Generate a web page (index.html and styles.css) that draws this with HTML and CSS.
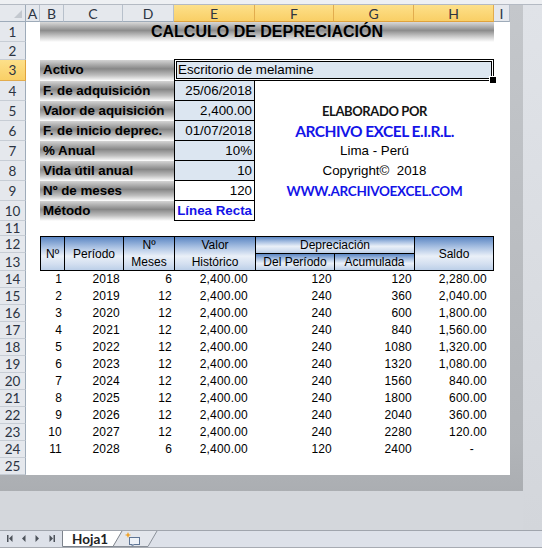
FILE: index.html
```html
<!DOCTYPE html>
<html lang="es">
<head>
<meta charset="utf-8">
<title>Calculo de depreciación</title>
<link rel="stylesheet" href="styles.css">
</head>
<body>
<div class="app">
  <div class="topstrip"></div>
  <div class="work">
    <div class="frame">
      <div class="sheet">
        <div class="corner"></div>
        <div class="ch">A</div>
        <div class="ch">B</div>
        <div class="ch">C</div>
        <div class="ch">D</div>
        <div class="ch sel">E</div>
        <div class="ch sel">F</div>
        <div class="ch sel">G</div>
        <div class="ch sel">H</div>
        <div class="ch">I</div>

        <div class="rh">1</div>
        <div class="rh">2</div>
        <div class="rh sel">3</div>
        <div class="rh">4</div>
        <div class="rh">5</div>
        <div class="rh">6</div>
        <div class="rh">7</div>
        <div class="rh">8</div>
        <div class="rh">9</div>
        <div class="rh">10</div>
        <div class="rh">11</div>
        <div class="rh">12</div>
        <div class="rh">13</div>
        <div class="rh">14</div>
        <div class="rh">15</div>
        <div class="rh">16</div>
        <div class="rh">17</div>
        <div class="rh">18</div>
        <div class="rh">19</div>
        <div class="rh">20</div>
        <div class="rh">21</div>
        <div class="rh">22</div>
        <div class="rh">23</div>
        <div class="rh">24</div>
        <div class="rh">25</div>

        <div class="title">CALCULO DE DEPRECIACIÓN</div>

        <div class="form">
          <div class="lbl">Activo</div>
          <div class="active">Escritorio de melamine</div>
          <div class="lbl">F. de adquisición</div>
          <div class="val">25/06/2018</div>
          <div class="lbl">Valor de aquisición</div>
          <div class="val">2,400.00</div>
          <div class="cr cr-by">ELABORADO POR</div>
          <div class="lbl">F. de inicio deprec.</div>
          <div class="val">01/07/2018</div>
          <div class="cr cr-name">ARCHIVO EXCEL E.I.R.L.</div>
          <div class="lbl">% Anual</div>
          <div class="val">10%</div>
          <div class="cr cr-text">Lima - Perú</div>
          <div class="lbl">Vida útil anual</div>
          <div class="val">10</div>
          <div class="cr cr-text">Copyright©&nbsp; 2018</div>
          <div class="lbl">Nº de meses</div>
          <div class="val white">120</div>
          <div class="cr cr-web">WWW.ARCHIVOEXCEL.COM</div>
          <div class="lbl">Método</div>
          <div class="val white link">Línea Recta</div>
        </div>

        <div class="thead">
          <div class="th span2">Nº</div>
          <div class="th span2">Período</div>
          <div class="th span2 two">Nº<br>Meses</div>
          <div class="th span2 two">Valor<br>Histórico</div>
          <div class="th dep">Depreciación</div>
          <div class="th span2">Saldo</div>
          <div class="th">Del Período</div>
          <div class="th">Acumulada</div>
        </div>

        <div class="tbody">
          <span>1</span><span>2018</span><span>6</span><span>2,400.00</span><span>120</span><span>120</span><span>2,280.00</span>
          <span>2</span><span>2019</span><span>12</span><span>2,400.00</span><span>240</span><span>360</span><span>2,040.00</span>
          <span>3</span><span>2020</span><span>12</span><span>2,400.00</span><span>240</span><span>600</span><span>1,800.00</span>
          <span>4</span><span>2021</span><span>12</span><span>2,400.00</span><span>240</span><span>840</span><span>1,560.00</span>
          <span>5</span><span>2022</span><span>12</span><span>2,400.00</span><span>240</span><span>1080</span><span>1,320.00</span>
          <span>6</span><span>2023</span><span>12</span><span>2,400.00</span><span>240</span><span>1320</span><span>1,080.00</span>
          <span>7</span><span>2024</span><span>12</span><span>2,400.00</span><span>240</span><span>1560</span><span>840.00</span>
          <span>8</span><span>2025</span><span>12</span><span>2,400.00</span><span>240</span><span>1800</span><span>600.00</span>
          <span>9</span><span>2026</span><span>12</span><span>2,400.00</span><span>240</span><span>2040</span><span>360.00</span>
          <span>10</span><span>2027</span><span>12</span><span>2,400.00</span><span>240</span><span>2280</span><span>120.00</span>
          <span>11</span><span>2028</span><span>6</span><span>2,400.00</span><span>120</span><span>2400</span><span class="dash">-</span>
        </div>
      </div>
    </div>
    <div class="rightfill"></div>
  </div>
  <div class="tabbar">
    <svg class="nav" width="62" height="16" viewBox="0 0 62 16">
      <g fill="#4d525a">
        <rect x="7" y="4" width="1.5" height="7"/>
        <path d="M12.5 4 L12.5 11 L9 7.5 Z"/>
        <path d="M25.5 4 L25.5 11 L22 7.5 Z"/>
        <path d="M35.5 4 L35.5 11 L39 7.5 Z"/>
        <path d="M49.5 4 L49.5 11 L53 7.5 Z"/>
        <rect x="53.5" y="4" width="1.5" height="7"/>
      </g>
    </svg>
    <div class="tabs">
      <svg class="tabshape" width="100" height="16" viewBox="0 0 100 16">
        <path d="M60 0 L51 15.5 L86 15.5 L95 0 Z" fill="#e3e6ec"/>
        <path d="M51 15.5 L86 15.5 L95 0" fill="none" stroke="#8a9099" stroke-width="1"/>
        <path d="M0.5 0 L0.5 15.5 L51 15.5 L60 0 Z" fill="#ffffff"/>
        <path d="M0.5 0 L0.5 15.5 L51 15.5 L60 0" fill="none" stroke="#7d838c" stroke-width="1"/>
        <rect x="67.5" y="6.5" width="10" height="7" fill="#eef2f8" stroke="#5f7595"/>
        <path d="M70 13.5 L70 15 L72.5 13.5" fill="#eef2f8" stroke="#5f7595" stroke-width="0.8"/>
        <path d="M66 1 L67 3.2 L69.2 4 L67 4.8 L66 7 L65 4.8 L62.8 4 L65 3.2 Z" fill="#f0a22a"/>
      </svg>
      <span class="tabname">Hoja1</span>
    </div>
  </div>
</div>
</body>
</html>
```

FILE: styles.css
```css
* { box-sizing: border-box; }

body {
  margin: 0;
  width: 542px;
  height: 548px;
  overflow: hidden;
  background: #d4d7dc;
  font-family: "Liberation Sans", Arial, sans-serif;
  color: #000;
}

.app {
  width: 542px;
  height: 548px;
  display: flex;
  flex-direction: column;
}

.topstrip {
  height: 5px;
  background: #eef0f3;
  border-bottom: 1px solid #b4bac3;
}

.work {
  height: 525px;
  display: flex;
  background: #d4d7dc;
}

.frame {
  align-self: flex-start;
  padding: 0 13px 16px 0;
  background: linear-gradient(#c4c7cb, #b2b5b9 90%, #abaeb2);
}

.rightfill {
  flex: 1;
  background: linear-gradient(#e0e3e8, #d3d6db);
}

.sheet {
  width: 510px;
  display: grid;
  grid-template-columns: 26px 14px 24px 59px 51px 81px 79px 80px 80px 16px;
  grid-template-rows: 17px 20px 18px 21px repeat(7, 20px) 15px 17px 18px repeat(12, 17px);
  background: #fff;
}

/* headers */
.corner,
.ch,
.rh {
  background: #e5e8ed;
  font-family: Lato, "Liberation Sans", sans-serif;
  font-size: 14px;
  color: #2c3442;
  display: flex;
  align-items: center;
  justify-content: center;
}

.corner {
  position: relative;
  border-right: 1px solid #9eabb9;
  border-bottom: 1px solid #9eabb9;
}

.corner::after {
  content: "";
  position: absolute;
  right: 3px;
  bottom: 3px;
  width: 0;
  height: 0;
  border-left: 8px solid transparent;
  border-bottom: 8px solid #c3c8cf;
}

.ch {
  border-right: 1px solid #b7c0cb;
  border-bottom: 1px solid #9eabb9;
}

.ch.sel {
  background: linear-gradient(#fde08a, #f9cf66);
  border-right-color: #e2ac4e;
  border-bottom-color: #e0a23c;
  color: #2e3540;
}

.rh {
  grid-column: 1;
  border-right: 1px solid #9eabb9;
  border-bottom: 1px solid #c7cdd5;
  font-size: 13.5px;
}

.rh.sel {
  background: linear-gradient(#fde08a, #f9cf66);
  border-right-color: #e0a23c;
  border-bottom-color: #e2ac4e;
}

/* title */
.title {
  grid-column: 3 / 10;
  grid-row: 2;
  background: linear-gradient(#d9d9d9 0%, #8c8c8c 42%, #c9c9c9 72%, #ffffff 100%);
  font-weight: bold;
  font-size: 16px;
  line-height: 20px;
  text-align: center;
}

/* form block */
.form {
  grid-column: 3 / 10;
  grid-row: 4 / 12;
  display: grid;
  grid-template-columns: 134px 81px 79px 80px 80px;
  grid-template-rows: 21px repeat(7, 20px);
}

.lbl {
  grid-column: 1;
  background: linear-gradient(#d4d4d4 0%, #878787 42%, #bdbdbd 72%, #ffffff 100%);
  font-weight: bold;
  font-size: 13.33px;
  line-height: 20px;
  padding-left: 3px;
  white-space: nowrap;
}

.active {
  grid-column: 2 / 6;
  position: relative;
  margin-top: -1px;
  height: 22px;
  background: #dce6f1;
  border: 1px solid #000;
  box-shadow: inset 0 0 0 1px #fff, inset 0 0 0 2px #000;
  font-size: 13.33px;
  line-height: 20px;
  padding-left: 3px;
}

.active::after {
  content: "";
  position: absolute;
  right: -4px;
  bottom: -4px;
  width: 6px;
  height: 6px;
  background: #000;
  border: 1px solid #fff;
}

.val {
  grid-column: 2;
  background: #dce6f1;
  border: 1px solid #000;
  border-top: none;
  font-size: 13.33px;
  line-height: 19px;
  text-align: right;
  padding-right: 2px;
  white-space: nowrap;
}

.val.white { background: #fff; }

.val.link {
  color: #1414e8;
  font-weight: bold;
}

.cr {
  grid-column: 3 / 6;
  text-align: center;
  white-space: nowrap;
  line-height: 20px;
}

.cr-by {
  font-family: Lato, "Liberation Sans", sans-serif;
  font-weight: bold;
  font-size: 13px;
  letter-spacing: -0.4px;
  color: #151515;
}

.cr-name {
  font-family: Lato, "Liberation Sans", sans-serif;
  font-weight: bold;
  font-size: 15.5px;
  letter-spacing: -0.5px;
  color: #1414e8;
}

.cr-text {
  font-size: 13.33px;
}

.cr-web {
  font-family: Lato, "Liberation Sans", sans-serif;
  font-weight: bold;
  font-size: 13.5px;
  letter-spacing: -0.3px;
  color: #1414e8;
}

/* table header */
.thead {
  grid-column: 3 / 10;
  grid-row: 13 / 15;
  display: grid;
  grid-template-columns: 23px 58px 50px 80px 78px 79px 78px;
  grid-template-rows: 16px 16px;
  gap: 1px;
  padding: 1px;
  background: #000;
}

.th {
  background: linear-gradient(#5b86c3 0%, #a8c0e2 30%, #eaf0f8 58%, #d3dff0 82%, #bccfe8 100%);
  font-size: 12px;
  line-height: 16px;
  text-align: center;
  display: flex;
  align-items: center;
  justify-content: center;
  white-space: nowrap;
}

.th.span2 { grid-row: span 2; }
.th.dep { grid-column: span 2; }
.th.two { line-height: 16.5px; }

/* table body */
.tbody {
  grid-column: 3 / 10;
  grid-row: 15 / 26;
  display: grid;
  grid-template-columns: 24px 59px 51px 81px 79px 80px 80px;
  grid-template-rows: repeat(11, 17px);
  align-content: start;
}

.tbody span {
  font-size: 12px;
  letter-spacing: 0.2px;
  line-height: 17px;
  text-align: right;
  white-space: nowrap;
}

.tbody span:nth-child(7n+1) { padding-right: 2px; }
.tbody span:nth-child(7n+2) { padding-right: 3px; }
.tbody span:nth-child(7n+3) { padding-right: 2px; }
.tbody span:nth-child(7n+4) { padding-right: 7px; }
.tbody span:nth-child(7n+5) { padding-right: 2px; }
.tbody span:nth-child(7n+6) { padding-right: 2px; }
.tbody span:nth-child(7n) { padding-right: 7px; }
.tbody span.dash { padding-right: 20px; }

/* sheet tabs */
.tabbar {
  height: 18px;
  border-top: 1px solid #a0a5ad;
  border-bottom: 1px solid #a7abb2;
  background: #dde1e9;
  display: flex;
}

.nav { display: block; flex: none; }

.tabs {
  position: relative;
  width: 100px;
  height: 16px;
  flex: none;
}

.tabshape {
  position: absolute;
  left: 0;
  top: 0;
}

.tabname {
  position: relative;
  display: block;
  padding-left: 10px;
  font-family: Lato, "Liberation Sans", sans-serif;
  font-weight: bold;
  font-size: 13.5px;
  line-height: 16px;
  color: #222;
}
```
